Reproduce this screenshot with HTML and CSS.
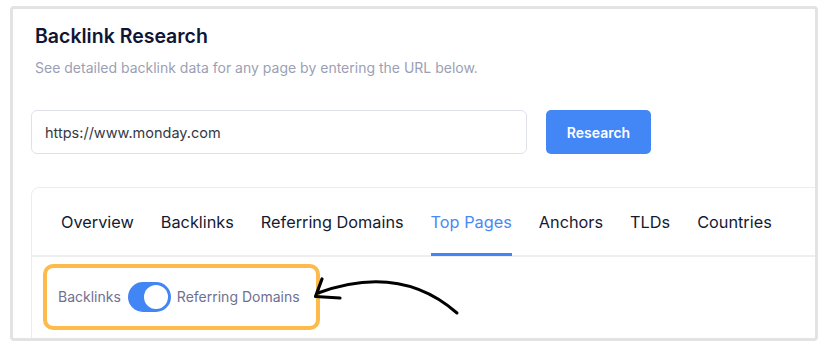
FILE: index.html
```html
<!DOCTYPE html>
<html>
<head>
<meta charset="utf-8">
<link rel="stylesheet" href="styles.css">
</head>
<body>
<div class="frame">
  <h1 class="title">Backlink Research</h1>
  <p class="subtitle">See detailed backlink data for any page by entering the URL below.</p>
  <div class="search">
    <div class="url-input">https://www.monday.com</div>
    <button class="btn">Research</button>
  </div>
  <div class="card">
    <nav class="tabs">
      <span class="tab">Overview</span>
      <span class="tab">Backlinks</span>
      <span class="tab">Referring Domains</span>
      <span class="tab active">Top Pages</span>
      <span class="tab">Anchors</span>
      <span class="tab">TLDs</span>
      <span class="tab">Countries</span>
    </nav>
    <div class="highlight">
      <span class="label">Backlinks</span>
      <span class="switch"><span class="knob"></span></span>
      <span class="label">Referring Domains</span>
    </div>
  </div>
</div>
<svg class="arrow" width="830" height="350" viewBox="0 0 830 350">
  <path d="M318 293 Q400 263 457 313" fill="none" stroke="#000" stroke-width="3" stroke-linecap="round"/>
  <path d="M322 279 L315.5 296.5 L340 298" fill="none" stroke="#000" stroke-width="3.2" stroke-linecap="round" stroke-linejoin="round"/>
</svg>
</body>
</html>
```
FILE: styles.css
```css
* { box-sizing: border-box; }
html, body { margin: 0; padding: 0; background: #fff; }
body {
  position: relative;
  width: 830px;
  height: 350px;
  overflow: hidden;
  font-family: Inter, "Noto Sans", sans-serif;
}
.frame {
  margin: 6px 0 0 10px;
  width: 808px;
  height: 335px;
  border: 3px solid #e3e3e3;
  border-radius: 4px;
  padding: 0 0 0 18px;
  overflow: hidden;
}
.title {
  margin: 15px 0 0 4px;
  font-size: 19.5px;
  line-height: 24px;
  font-weight: 600;
  color: #0f1535;
}
.subtitle {
  margin: 10px 0 0 4px;
  font-size: 14px;
  line-height: 20px;
  color: #9b9fb5;
}
.search {
  display: flex;
  gap: 19px;
  margin-top: 32px;
}
.url-input {
  width: 496px;
  height: 44px;
  border: 1px solid #dfe1e8;
  border-radius: 6px;
  padding: 0 0 0 13px;
  display: flex;
  align-items: center;
  font-size: 14.5px;
  color: #343846;
}
.btn {
  width: 105px;
  height: 44px;
  border: 0;
  border-radius: 5px;
  background: #4287f5;
  color: #fff;
  font-family: Inter, "Noto Sans", sans-serif;
  font-size: 14px;
  font-weight: 600;
}
.card {
  margin-top: 33px;
  width: 900px;
  height: 200px;
  border: 1px solid #ececec;
  border-radius: 8px;
}
.tabs {
  display: flex;
  gap: 27px;
  padding-left: 29px;
  border-bottom: 2px solid #efefef;
}
.tab {
  padding: 24px 0 21px;
  margin-bottom: -1px;
  font-size: 16.3px;
  line-height: 20px;
  color: #141a33;
  border-bottom: 3px solid transparent;
}
.tab.active {
  color: #4a88f5;
  border-bottom-color: #4285f4;
}
.highlight {
  display: inline-flex;
  align-items: center;
  margin: 7px 0 0 11px;
  padding: 14px 16px 14px 11px;
  border: 4px solid #fdbb4b;
  border-radius: 10px;
}
.label {
  font-size: 14px;
  line-height: 20px;
  color: #6e7191;
}
.switch {
  display: flex;
  align-items: center;
  justify-content: flex-end;
  width: 43px;
  height: 30px;
  margin: 0 6px 0 7px;
  padding: 0 3px;
  border-radius: 15px;
  background: #4285f4;
}
.knob {
  width: 24px;
  height: 24px;
  border-radius: 50%;
  background: #fff;
}
.arrow {
  position: absolute;
  left: 0;
  top: 0;
  pointer-events: none;
}
```
